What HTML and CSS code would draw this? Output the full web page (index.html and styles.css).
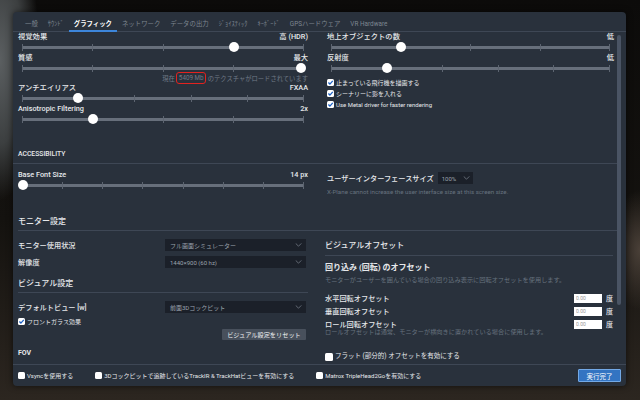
FILE: index.html
```html
<!DOCTYPE html>
<html lang="ja">
<head>
<meta charset="utf-8">
<title>Graphics settings</title>
<link rel="stylesheet" href="styles.css">
</head>
<body>
<div class="dialog">
  <nav class="tabs">
    <span class="tab">一般</span>
    <span class="tab">ｻｳﾝﾄﾞ</span>
    <span class="tab active">グラフィック</span>
    <span class="tab">ネットワーク</span>
    <span class="tab">データの出力</span>
    <span class="tab">ｼﾞｮｲｽﾃｨｯｸ</span>
    <span class="tab">ｷｰﾎﾞｰﾄﾞ</span>
    <span class="tab">GPSハードウェア</span>
    <span class="tab">VR Hardware</span>
  </nav>

  <div class="content">
    <div class="scrollbar"></div>

    <div class="cols">
      <div class="col">
        <div class="slider">
          <div class="slabel"><span>視覚効果</span><span>高 (HDR)</span></div>
          <div class="track"><div class="rail"><i></i><i></i><i></i><i></i><i></i></div><b class="thumb" style="left:75%"></b></div>
        </div>
        <div class="slider">
          <div class="slabel"><span>質感</span><span>最大</span></div>
          <div class="track"><div class="rail"><i></i><i></i><i></i><i></i><i></i></div><b class="thumb" style="left:99%"></b></div>
        </div>
        <div class="note">現在 <span class="mark">5409 Mb</span> のテクスチャがロードされています</div>
        <div class="slider">
          <div class="slabel"><span>アンチエイリアス</span><span>FXAA</span></div>
          <div class="track"><div class="rail"><i></i><i></i><i></i><i></i><i></i><i></i></div><b class="thumb" style="left:20%"></b></div>
        </div>
        <div class="slider">
          <div class="slabel"><span>Anisotropic Filtering</span><span>2x</span></div>
          <div class="track"><div class="rail"><i></i><i></i><i></i><i></i><i></i></div><b class="thumb" style="left:25%"></b></div>
        </div>
      </div>

      <div class="col">
        <div class="slider">
          <div class="slabel"><span>地上オブジェクトの数</span><span>低</span></div>
          <div class="track"><div class="rail"><i></i><i></i><i></i><i></i><i></i></div><b class="thumb" style="left:25%"></b></div>
        </div>
        <div class="slider">
          <div class="slabel"><span>反射度</span><span>低</span></div>
          <div class="track"><div class="rail"><i></i><i></i><i></i><i></i><i></i><i></i></div><b class="thumb" style="left:20%"></b></div>
        </div>
        <div class="checks">
          <label class="check"><span class="cb"><svg viewBox="0 0 8 8"><path d="M1.6 4.1 3.3 5.8 6.6 2.1"/></svg></span>止まっている飛行機を描画する</label>
          <label class="check"><span class="cb"><svg viewBox="0 0 8 8"><path d="M1.6 4.1 3.3 5.8 6.6 2.1"/></svg></span>シーナリーに影を入れる</label>
          <label class="check"><span class="cb"><svg viewBox="0 0 8 8"><path d="M1.6 4.1 3.3 5.8 6.6 2.1"/></svg></span>Use Metal driver for faster rendering</label>
        </div>
      </div>
    </div>

    <h3 class="acc-head">ACCESSIBILITY</h3>

    <div class="cols acc">
      <div class="col">
        <div class="slider">
          <div class="slabel"><span>Base Font Size</span><span>14 px</span></div>
          <div class="track"><div class="rail"><i></i><i></i><i></i><i></i><i></i><i></i><i></i><i></i></div><b class="thumb" style="left:0.5%"></b></div>
        </div>
      </div>
      <div class="col ui-col">
        <div class="ui-row">
          <span class="label">ユーザーインターフェースサイズ</span>
          <span class="select small">100%<svg viewBox="0 0 8 5"><path d="M.5.5 4 4 7.5.5"/></svg></span>
        </div>
        <div class="sub">X-Plane cannot increase the user interface size at this screen size.</div>
      </div>
    </div>

    <h3 class="mon-head">モニター設定</h3>

    <div class="cols lower">
      <div class="col">
        <div class="row first">
          <span class="label">モニター使用状況</span>
          <span class="select">フル画面シミュレーター<svg viewBox="0 0 8 5"><path d="M.5.5 4 4 7.5.5"/></svg></span>
        </div>
        <div class="row">
          <span class="label">解像度</span>
          <span class="select">1440×900 (60 hz)<svg viewBox="0 0 8 5"><path d="M.5.5 4 4 7.5.5"/></svg></span>
        </div>
        <h3 class="vis-head">ビジュアル設定</h3>
        <div class="row view-row">
          <span class="label">デフォルトビュー [w]</span>
          <span class="select">前面3Dコックピット<svg viewBox="0 0 8 5"><path d="M.5.5 4 4 7.5.5"/></svg></span>
        </div>
        <label class="check wind"><span class="cb"><svg viewBox="0 0 8 8"><path d="M1.6 4.1 3.3 5.8 6.6 2.1"/></svg></span>フロントガラス効果</label>
        <div class="btn-row"><button class="btn">ビジュアル設定をリセット</button></div>
        <h4 class="fov">FOV</h4>
      </div>

      <div class="col offs">
        <h3 class="off-head">ビジュアルオフセット</h3>
        <h4 class="wrap-head">回り込み (回転) のオフセット</h4>
        <div class="sub">モニターがユーザーを囲んでいる場合の回り込み表示に回転オフセットを使用します。</div>
        <div class="orow o1"><span class="label">水平回転オフセット</span><span class="num"><input class="inp" value="0.00" readonly>度</span></div>
        <div class="orow"><span class="label">垂直回転オフセット</span><span class="num"><input class="inp" value="0.00" readonly>度</span></div>
        <div class="orow"><span class="label">ロール回転オフセット</span><span class="num"><input class="inp" value="0.00" readonly>度</span></div>
        <div class="sub tight">ロールオフセットは通常、モニターが横向きに置かれている場合に使用します。</div>
        <label class="check flat"><span class="cb off"></span>フラット (部分的) オフセットを有効にする</label>
      </div>
    </div>
  </div>

  <footer class="footer">
    <label class="check"><span class="cb off"></span>Vsyncを使用する</label>
    <label class="check"><span class="cb off"></span>3Dコックピットで追跡しているTrackIR &amp; TrackHatビューを有効にする</label>
    <label class="check"><span class="cb off"></span>Matrox TripleHead2Goを有効にする</label>
    <button class="done">実行完了</button>
  </footer>
</div>
</body>
</html>
```

FILE: styles.css
```css
* { box-sizing: border-box; margin: 0; padding: 0; }

html, body { width: 640px; height: 400px; overflow: hidden; }

body {
  padding: 12px 0 0 13px;
  font-family: "Roboto", "Noto Sans CJK JP", sans-serif;
  color: #e6e8eb;
  background:
    radial-gradient(ellipse 40px 140px at 0 60px, #5b5f61 0, #3c3f40 60%, transparent 100%),
    radial-gradient(ellipse 30px 60px at 640px 250px, #4a4038 0, transparent 100%),
    linear-gradient(#0c0b0a 0, #14120f 55%, #2c2620 100%);
}

.dialog {
  width: 613px;
  height: 374px;
  background: #29313c;
  border-radius: 4px;
  display: flex;
  flex-direction: column;
  box-shadow: 0 0 6px rgba(0, 0, 0, .6);
}

/* tabs */
.tabs {
  display: flex;
  align-items: flex-end;
  height: 20px;
  padding-left: 7px;
  border-bottom: 1px solid #3e4755;
}
.tab {
  font-size: 6.4px;
  line-height: 11px;
  padding: 0 5px;
  margin-bottom: -1px;
  color: #7d8690;
  border-bottom: 2px solid transparent;
  white-space: nowrap;
}
.tab.active {
  color: #ffffff;
  font-weight: 700;
  border-bottom-color: #3d86db;
}

/* content */
.content {
  flex: 1;
  position: relative;
  padding: 0 12px 0 5px;
}
.scrollbar {
  position: absolute;
  right: 5px;
  top: 3px;
  width: 4px;
  height: 270px;
  background: #4a5464;
  border-radius: 2px;
}

.cols {
  display: grid;
  grid-template-columns: 290px 287px;
  column-gap: 19px;
}

/* sliders */
.slider { height: 21px; }
.slabel {
  display: flex;
  justify-content: space-between;
  font-size: 7.3px;
  line-height: 10px;
  height: 10px;
  font-weight: 500;
  white-space: nowrap;
}
.track {
  position: relative;
  height: 11px;
  margin: 0 4px;
}
.rail {
  position: absolute;
  left: 0;
  right: 0;
  top: 4px;
  height: 3px;
  background: #676f7b;
  display: flex;
  justify-content: space-between;
}
.rail i {
  width: 1px;
  height: 7px;
  margin-top: -2px;
  background: #5d6571;
}
.thumb {
  position: absolute;
  top: 0;
  width: 10px;
  height: 10px;
  margin-left: -5px;
  border-radius: 50%;
  background: #ffffff;
}

.note {
  height: 9px;
  line-height: 9px;
  font-size: 6.3px;
  color: #6f7986;
  text-align: right;
  white-space: nowrap;
}
.mark {
  display: inline-block;
  border: 1.5px solid #e3221f;
  border-radius: 3px;
  padding: 1px 1.5px;
  line-height: 8px;
  vertical-align: middle;
  margin-top: -2px;
}

/* checkboxes */
.checks { margin-top: 3px; }
.check {
  display: flex;
  align-items: center;
  gap: 2px;
  font-size: 6px;
  line-height: 11px;
  height: 11px;
  white-space: nowrap;
}
.cb {
  flex: none;
  width: 7px;
  height: 7px;
  background: #ffffff;
  border-radius: 1.5px;
  display: inline-flex;
}
.cb svg {
  width: 7px;
  height: 7px;
  fill: none;
  stroke: #1e62c6;
  stroke-width: 1.5;
}

/* section heads */
.acc-head {
  margin: 24px -3px 0 -5px;
  padding: 0 0 3px 5px;
  font-size: 6.8px;
  line-height: 11px;
  font-weight: 500;
  border-bottom: 1px solid #3e4755;
}
.acc { margin-top: 6px; }
.ui-col { padding-top: 2px; padding-left: 0; }
.ui-row {
  display: flex;
  align-items: center;
  gap: 4px;
  height: 12px;
}
.label {
  font-size: 7.2px;
  font-weight: 500;
  white-space: nowrap;
}
.sub {
  font-size: 6.2px;
  line-height: 8px;
  color: #67717e;
  margin-top: 4px;
  white-space: nowrap;
}

.select {
  display: flex;
  align-items: center;
  justify-content: space-between;
  height: 12px;
  padding: 0 4px 0 5px;
  background: #1b2029;
  color: #9ba3ad;
  font-size: 6px;
  white-space: nowrap;
}
.select svg {
  width: 7px;
  height: 4px;
  fill: none;
  stroke: #8a939d;
  stroke-width: .8;
}
.select.small { width: 35px; padding: 0 3px 0 4px; }

.mon-head {
  margin: 21px -3px 0 0;
  padding-bottom: 3px;
  font-size: 8px;
  line-height: 10px;
  font-weight: 500;
  border-bottom: 1px solid #3e4755;
}

/* lower left */
.row {
  display: flex;
  align-items: center;
  justify-content: space-between;
  height: 12px;
  margin-top: 5px;
  padding-right: 2px;
}
.row.first { margin-top: 8px; }
.row .select { width: 141px; }
.vis-head {
  margin-top: 11px;
  padding-bottom: 3px;
  font-size: 8px;
  line-height: 10px;
  font-weight: 500;
  border-bottom: 1px solid #3e4755;
}
.row.view-row { margin-top: 8px; }
.check.wind { margin-top: 4px; height: 9px; }
.btn-row {
  display: flex;
  justify-content: flex-end;
  margin-top: 3px;
  padding-right: 2px;
}
.btn {
  height: 11px;
  width: 84px;
  border: none;
  border-radius: 1px;
  background: #48505c;
  color: #eef0f2;
  font-family: inherit;
  font-size: 6.2px;
}
.fov {
  margin-top: 8px;
  font-size: 7px;
  line-height: 10px;
  font-weight: 700;
}

/* lower right */
.offs { margin-left: -2px; padding-right: 1px; }
.off-head {
  margin-top: 10px;
  padding-bottom: 4px;
  font-size: 8px;
  line-height: 10px;
  font-weight: 500;
  border-bottom: 1px solid #3e4755;
}
.wrap-head {
  margin-top: 7px;
  font-size: 8px;
  line-height: 10px;
  font-weight: 700;
}
.offs .sub { margin-top: 3px; }
.orow {
  display: flex;
  align-items: center;
  justify-content: space-between;
  height: 10px;
  margin-top: 3px;
}
.orow.o1 { margin-top: 9px; }
.num {
  display: flex;
  align-items: center;
  gap: 4px;
  font-size: 7px;
  font-weight: 500;
}
.inp {
  width: 28px;
  height: 9px;
  border: none;
  background: #ffffff;
  color: #9a9a9a;
  font-family: inherit;
  font-size: 5px;
  padding: 0 2px;
}
.offs .sub.tight { margin-top: 0; line-height: 6px; }
.check.flat {
  margin-top: 16px;
  font-size: 6.5px;
  gap: 2px;
}
.check.flat .cb { width: 8px; height: 8px; }

/* footer */
.footer {
  height: 22px;
  border-top: 1px solid #3e4755;
  display: flex;
  align-items: center;
  gap: 22px;
  padding: 0 5px;
}
.footer .check { font-size: 6px; }
.done {
  margin-left: auto;
  width: 43px;
  height: 13px;
  background: #3374c2;
  border: 1px solid #73a9e6;
  border-radius: 1px;
  color: #ffffff;
  font-family: inherit;
  font-size: 6.5px;
}
```
